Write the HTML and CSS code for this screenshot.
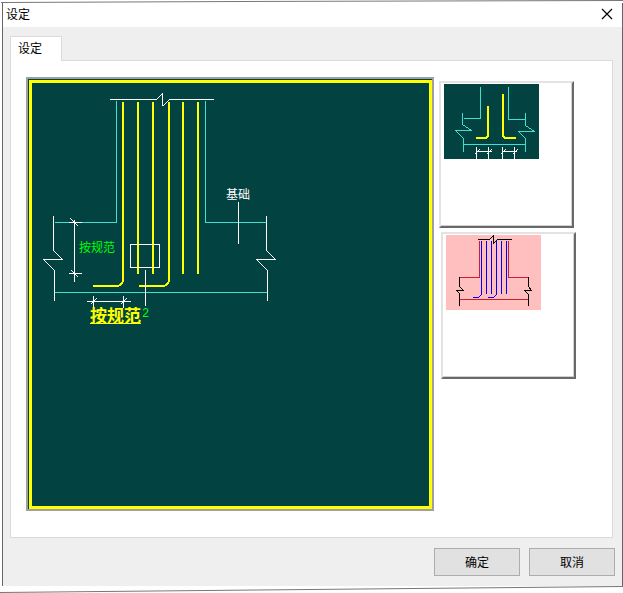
FILE: index.html
```html
<!DOCTYPE html>
<html lang="zh-CN">
<head>
<meta charset="utf-8">
<title>设定</title>
<link rel="stylesheet" href="styles.css">
</head>
<body>
<svg class="edge edge-top" viewBox="0 0 623 3" preserveAspectRatio="none" aria-hidden="true"><path d="M1 2.5L240 1.5L623 .5"/></svg>
<main class="dialog">
  <header class="titlebar">
    <h1>设定</h1>
    <button class="close" type="button" aria-label="关闭"><svg width="12" height="12" viewBox="0 0 12 12"><path d="M1 1L11 11M11 1L1 11"/></svg></button>
  </header>
  <div class="content">
    <div class="tabs" role="tablist"><button class="tab" type="button" role="tab" aria-selected="true">设定</button></div>
    <section class="panel" role="tabpanel">
      <div class="canvas">
        <svg width="404" height="430" viewBox="28 79 404 430">
          <path class="frame" d="M30.5 81.5H430.5V507.5H30.5Z"/>
          <g class="bar" transform="translate(0 0)">
            <path d="M123 102V279Q123 286 116 286H93M169 102V279Q169 286 162 286H139"/>
            <path d="M138 102V274M153 102V274M183 102V274M198 102V274"/>
          </g>
          <g transform="translate(.5 .5)">
            <path class="teal" d="M54 222H116V100M205 100V222H266M54 292H267"/>
            <path class="white" d="M109 99H156L162 93V105L163 105L169 99H213"/>
            <path class="white" d="M53 215V250L62 259H43L54 270V300M266 215V250L275 259H256L267 270V300"/>
            <path class="white" d="M74 219V281M68 222H81M70 218L78 226M68 273H81M71 270L78 277"/>
            <path class="white" d="M86 301H130M93 295V307M123 295V307M90 304L96 298M120 304L126 298"/>
            <path class="white" d="M130 244H159V267H130ZM145 269V305M238 201V243"/>
          </g>
          <text class="note" x="226" y="199">基础</text>
          <text class="note green" x="79" y="252">按规范</text>
          <text class="active" x="90" y="322">按规范</text>
          <path class="rule" d="M90 323.5H141"/>
          <text class="count" x="142" y="317">2</text>
        </svg>
      </div>
      <div class="choices">
        <button class="choice" type="button" aria-label="基础样式一">
          <svg class="dark" width="95" height="75" viewBox="444 84 95 75">
            <path class="bar" d="M488 106V134Q488 138 484 138H476M503 94V134Q503 138 507 138H516"/>
            <g transform="translate(.5 .5)">
              <path class="teal" d="M463 118H480V86M508 86V119H525M463 144H525"/>
              <path class="teal" d="M462 112V124L471 130H455L463 138V151M525 112V125L534 131H518L525 138V151"/>
              <path class="white" d="M476 146V158M488 146V158M502 146V158M514 146V158M475 151H491M502 151H516M474 154L479 149M486 154L491 149M500 154L505 149M512 154L517 149"/>
            </g>
          </svg>
        </button>
        <button class="choice offset" type="button" aria-label="基础样式二">
          <svg class="pink" width="95" height="75" viewBox="446 235 95 75">
            <g transform="translate(.5 .5)">
              <path class="red" d="M459 277H479V240M508 240V277H528M459 299H528"/>
              <path class="blue" d="M481 240V294L478 297H472M496 240V294L493 297H487M486 240V293M491 240V293M501 240V293M506 240V293"/>
              <path class="black" d="M477 239H489L493 235V243L497 239H511"/>
              <path class="black" d="M459 276V286L463 290H456L459 293V305M528 276V286L531 290H524L528 294V305"/>
            </g>
          </svg>
        </button>
      </div>
    </section>
    <footer class="actions">
      <button type="button">确定</button>
      <button type="button">取消</button>
    </footer>
  </div>
</main>
<svg class="edge edge-bottom" viewBox="0 0 623 7" preserveAspectRatio="none" aria-hidden="true"><path d="M0 6.5L310 3.5L623 .5"/></svg>
</body>
</html>
```

FILE: styles.css
```css
* { box-sizing: border-box; }
body {
  display: flex;
  flex-direction: column;
  min-height: 100vh;
  margin: 0;
  background: #fff;
  color: #000;
  font: 12px/16px "Noto Sans CJK SC", sans-serif;
}
button { font: inherit; color: inherit; }
svg { display: block; }
.edge { width: 100%; fill: none; stroke: #777; }
.edge-top { height: 3px; }
.edge-bottom { height: 7px; }
.dialog {
  display: flex;
  flex: 1;
  flex-direction: column;
  margin-left: 2px;
  border: solid #666;
  border-width: 0 1px;
}
.titlebar {
  display: flex;
  align-items: center;
  justify-content: space-between;
  height: 24px;
  padding: 0 8px 2px 3px;
}
h1 { margin: 0; font-size: 12px; font-weight: 400; }
.close { padding: 0 1px; border: 0; background: none; }
.close svg { fill: none; stroke: #000; stroke-width: 1.2; }
.content {
  display: flex;
  flex: 1;
  flex-direction: column;
  padding: 9px 7px 10px;
  background: #efefef;
}
.tabs { display: flex; }
.tab {
  z-index: 1;
  width: 52px;
  height: 25px;
  margin-bottom: -1px;
  padding: 0 12px 2px 7px;
  border: 1px solid #dadada;
  border-bottom: 0;
  background: #fff;
  text-align: left;
}
.panel {
  display: flex;
  flex: 1;
  align-items: flex-start;
  gap: 5px;
  margin-right: 2px;
  padding: 16px 15px;
  border: 1px solid #dadada;
  background: #fff;
}
.canvas { flex: none; border: 2px solid #9f9f9f; background: #024240; }
.canvas svg, .choice svg { fill: none; shape-rendering: crispEdges; }
.frame { stroke: #ff0; stroke-width: 3; }
.bar { stroke: #ff0; stroke-width: 2; }
.teal { stroke: #40e0d0; }
.white { stroke: #fff; }
.red { stroke: #c82030; }
.blue { stroke: #00f; }
.black { stroke: #000; }
.rule { stroke: #ff0; }
.dark { background: #024240; }
.pink { background: #ffbfbf; }
.note { fill: #fff; font-size: 12px; }
.note.green, .count { fill: #0f0; }
.active { fill: #ff0; font-size: 17px; font-weight: 700; }
.count { font: 12px "Liberation Mono", monospace; }
.choices { display: grid; gap: 4px; padding-top: 4px; }
.choice {
  display: flex;
  align-items: flex-start;
  width: 135px;
  height: 147px;
  padding: 1px 3px;
  border: 2px solid;
  border-color: #e3e3e3 #696969 #696969 #e3e3e3;
  background: #fff;
  box-shadow: inset -1px -1px #d0d0d0;
}
.offset { margin-left: 2px; }
.actions {
  display: flex;
  justify-content: flex-end;
  gap: 9px;
  margin-top: 10px;
}
.actions button {
  width: 86px;
  height: 28px;
  padding: 0 0 1px;
  border: 1px solid #adadad;
  background: #e1e1e1;
}
```
